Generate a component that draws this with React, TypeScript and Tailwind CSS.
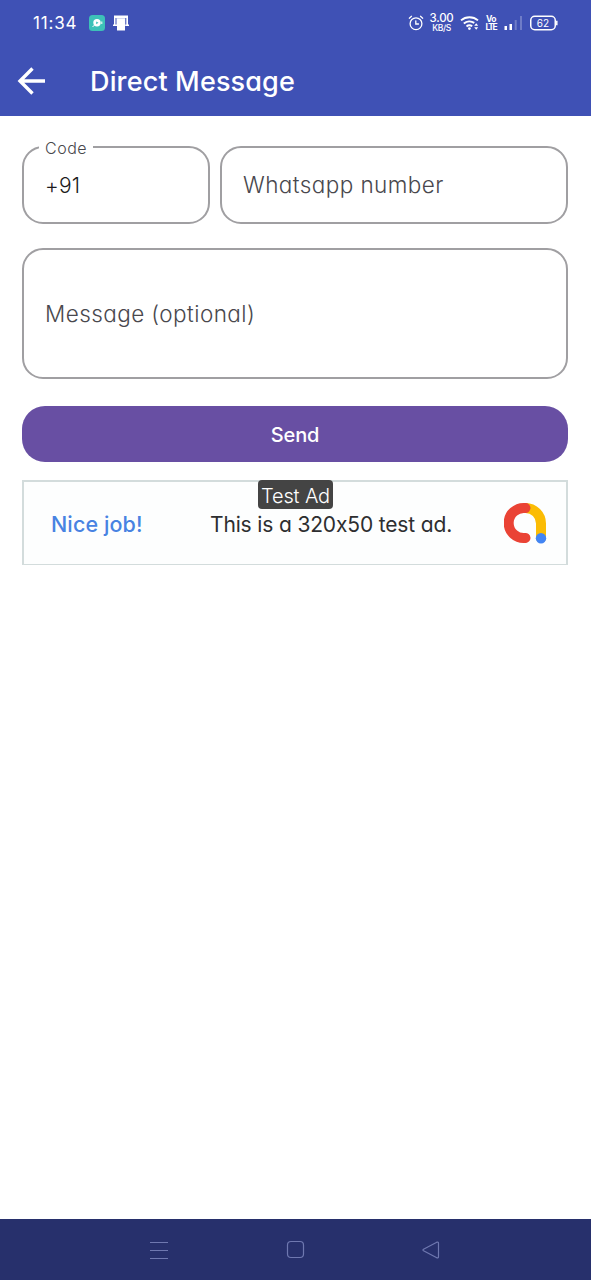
import type { ReactNode } from "react";

const FONT = "font-['Inter','Noto_Sans',sans-serif] [font-feature-settings:'cv11','calt'_0]";

function StatusBar() {
  return (
    <div className="flex h-[46px] items-center pl-[33px] pr-[33px] text-white">
      <span className="w-[44px] whitespace-nowrap text-[17px] leading-none tracking-[0.8px]">11:34</span>
      <svg className="ml-[12px] h-4 w-4" viewBox="0 0 16 16" aria-hidden>
        <rect width="16" height="16" rx="3.5" fill="#3dc1b8" />
        <circle cx="8" cy="7.8" r="3.7" fill="#fff" />
        <path d="M3.5 12l2-2M12.800 6.500v2.500" stroke="#fff" fill="none" />
        <path d="M7.200 6.400v2.900l2.300-1.450z" fill="#3dc1b8" />
      </svg>
      <svg className="ml-2 h-4 w-4" viewBox="0 0 16 16" aria-hidden>
        <path d="M1 .5h14v9h1.200v1.500h-4V3H4v8H0V9.500h1z" fill="#fff" />
        <path d="M4 3.200h8V15.500H4z" fill="#fff" />
        <path d="M3 3v6.500M12.800 3v6.500" stroke="#3f51b5" strokeWidth="1" />
      </svg>

      <div className="ml-auto flex items-center">
        <svg className="h-4 w-4" viewBox="0 0 16 16" fill="none" stroke="#fff" strokeWidth="1.300" strokeLinecap="round" aria-hidden>
          <circle cx="8" cy="8.700" r="5.900" />
          <path d="M7.800 5.800v3.200h2.700M1.300 3.200L3.500 1.300M14.700 3.200l-2.200-1.900" />
        </svg>
        <div className="ml-[5px] flex w-[25px] flex-col items-center whitespace-nowrap font-medium">
          <span className="text-[11.500px] leading-[9px] tracking-[-0.2px]">3.00</span>
          <span className="mt-px text-[8.500px] leading-[8px] tracking-[-0.4px]">KB/S</span>
        </div>
        <svg className="ml-[6px] h-4 w-5" viewBox="0 0 20 16" fill="none" stroke="#fff" strokeWidth="1.900" aria-hidden>
          <path d="M1 5.400a13 13 0 0 1 17 0M3.800 8.500a8.700 8.700 0 0 1 10.500-.6M6.500 11.400a4.600 4.600 0 0 1 5.700-.1" />
          <circle cx="9.400" cy="13.600" r="1.400" fill="#fff" stroke="none" />
          <path d="M14.200 10.800l2-2.500 2 2.500zM14.200 12.300l2 2.500 2-2.500z" fill="#fff" stroke="none" />
        </svg>
        <div className="ml-[5px] flex w-[12px] flex-col items-center font-bold">
          <span className="text-[8.500px] leading-[7px] tracking-[-0.6px]">Vo</span>
          <span className="text-[8.500px] leading-[8px] tracking-[-1.3px]">LTE</span>
        </div>
        <svg className="ml-[7px] h-4 w-[19px]" viewBox="0 0 19 16" fill="#fff" aria-hidden>
          <rect x="0.500" y="11" width="2.500" height="4" />
          <rect x="5.500" y="9" width="2.500" height="6" />
          <rect x="10.700" y="5" width="2" height="10" opacity=".25" />
          <rect x="16" y="1" width="2" height="14" opacity=".25" />
        </svg>
        <svg className="ml-[7px] h-4 w-7" viewBox="0 0 28 16" fill="none" aria-hidden>
          <rect x="0.750" y="1.250" width="24.500" height="13.500" rx="4" stroke="#fff" strokeWidth="1.500" />
          <path d="M26.800 5.800v4.400" stroke="#fff" strokeWidth="1.500" />
          <text x="13" y="11.500" textAnchor="middle" fill="#fff" fontSize="10">62</text>
        </svg>
      </div>
    </div>
  );
}

function Field({ className, children }: { className: string; children: ReactNode }) {
  return (
    <div
      className={`relative flex items-center rounded-[21px] border-2 border-[#a09fa2] pl-[21px] text-[22.500px] font-[350] tracking-[0.42px] text-[#49484d] ${className}`}
    >
      {children}
    </div>
  );
}

function TestAd() {
  return (
    <div className="relative mt-[18px] flex h-[85px] items-center border-2 border-b border-[#d3dcdc] bg-[#fdfefe] text-[21px]">
      <span className="mt-[3px] ml-[27px] w-[159px] whitespace-nowrap text-[21.500px] font-medium tracking-[0.1px] text-[#4883e2]">
        Nice job!
      </span>
      <span className="mt-[3px] whitespace-nowrap tracking-[-0.15px] text-[#2d2e30]">This is a 320x50 test ad.</span>
      <svg className="ml-auto mr-[19px] h-[42px] w-[43px]" viewBox="0 0 43 42" fill="none" strokeWidth="10" strokeLinecap="round" aria-hidden>
        <path d="M21.500 6A15.500 15.500 0 0 1 37 21.500V36" stroke="#fbbc04" />
        <path d="M21.500 6A15.100 15.100 0 1 0 21.500 36" stroke="#ea4335" />
        <circle cx="37" cy="36.200" r="5.200" fill="#4285f4" />
      </svg>
      <span className="absolute -top-[2px] left-[234px] flex h-[29px] w-[75px] items-center justify-center whitespace-nowrap rounded-[4px] bg-[#444] pt-[2px] text-[20px] font-[350] tracking-[-0.15px] text-white">
        Test Ad
      </span>
    </div>
  );
}

export default function App() {
  return (
    <div className={`flex h-[1280px] w-[591px] flex-col overflow-hidden bg-white ${FONT}`}>
      <header className="h-[116px] bg-[#3f51b5] text-white">
        <StatusBar />
        <div className="flex h-[70px] items-center pl-[17px]">
          <button type="button" aria-label="Back">
            <svg className="h-7 w-[29px]" viewBox="0 0 29 28" fill="none" stroke="#fff" strokeWidth="3.400" aria-hidden>
              <path d="M28 14H3M15.500 1.500L3 14l12.500 12.500" />
            </svg>
          </button>
          <h1 className="mt-[3px] ml-[44px] whitespace-nowrap text-[27px] font-medium tracking-[0.15px]">Direct Message</h1>
        </div>
      </header>

      <main className="flex flex-1 flex-col px-[22px] pt-[30px] pr-[23px]">
        <div className="flex gap-[10px]">
          <Field className="h-[78px] w-[188px]">
            <span className="absolute -top-[10px] left-[15px] bg-white px-[6px] text-[16px] leading-5 tracking-[0.5px]">
              Code
            </span>
            <span className="mt-[2px] text-[21px] tracking-[0.2px] text-[#1d1b20]">+91</span>
          </Field>
          <Field className="h-[78px] flex-1">Whatsapp number</Field>
        </div>
        <Field className="mt-6 h-[131px]">Message (optional)</Field>
        <button type="button" className="mt-[27px] h-14 rounded-[23px] bg-[#684fa3] pt-[2px] text-[20px] font-medium tracking-[-0.2px] text-white">
          Send
        </button>
        <TestAd />
      </main>

      <nav className="flex h-[61px] items-center bg-[#27306c]">
        <svg className="ml-[150px] h-[18px] w-[18px]" viewBox="0 0 18 18" stroke="#6f78b0" aria-hidden>
          <path d="M0 1.500h18M0 9.500h18M0 17.500h18" />
        </svg>
        <svg className="ml-[118px] h-[19px] w-[19px]" viewBox="0 0 19 19" fill="none" stroke="#6f78b0" strokeWidth="1.200" aria-hidden>
          <rect x="1.500" y="1.500" width="16" height="16" rx="3.500" />
        </svg>
        <svg className="ml-[117px] h-[18px] w-[18px]" viewBox="0 0 18 18" fill="none" stroke="#6f78b0" strokeWidth="1.200" strokeLinejoin="round" aria-hidden>
          <path d="M1.500 8.200L14.800 1.200Q16.500.700 16.500 2.200V15.800Q16.500 17.300 14.800 16.800L1.500 9.800Q.500 9 1.500 8.200z" />
        </svg>
      </nav>
    </div>
  );
}
